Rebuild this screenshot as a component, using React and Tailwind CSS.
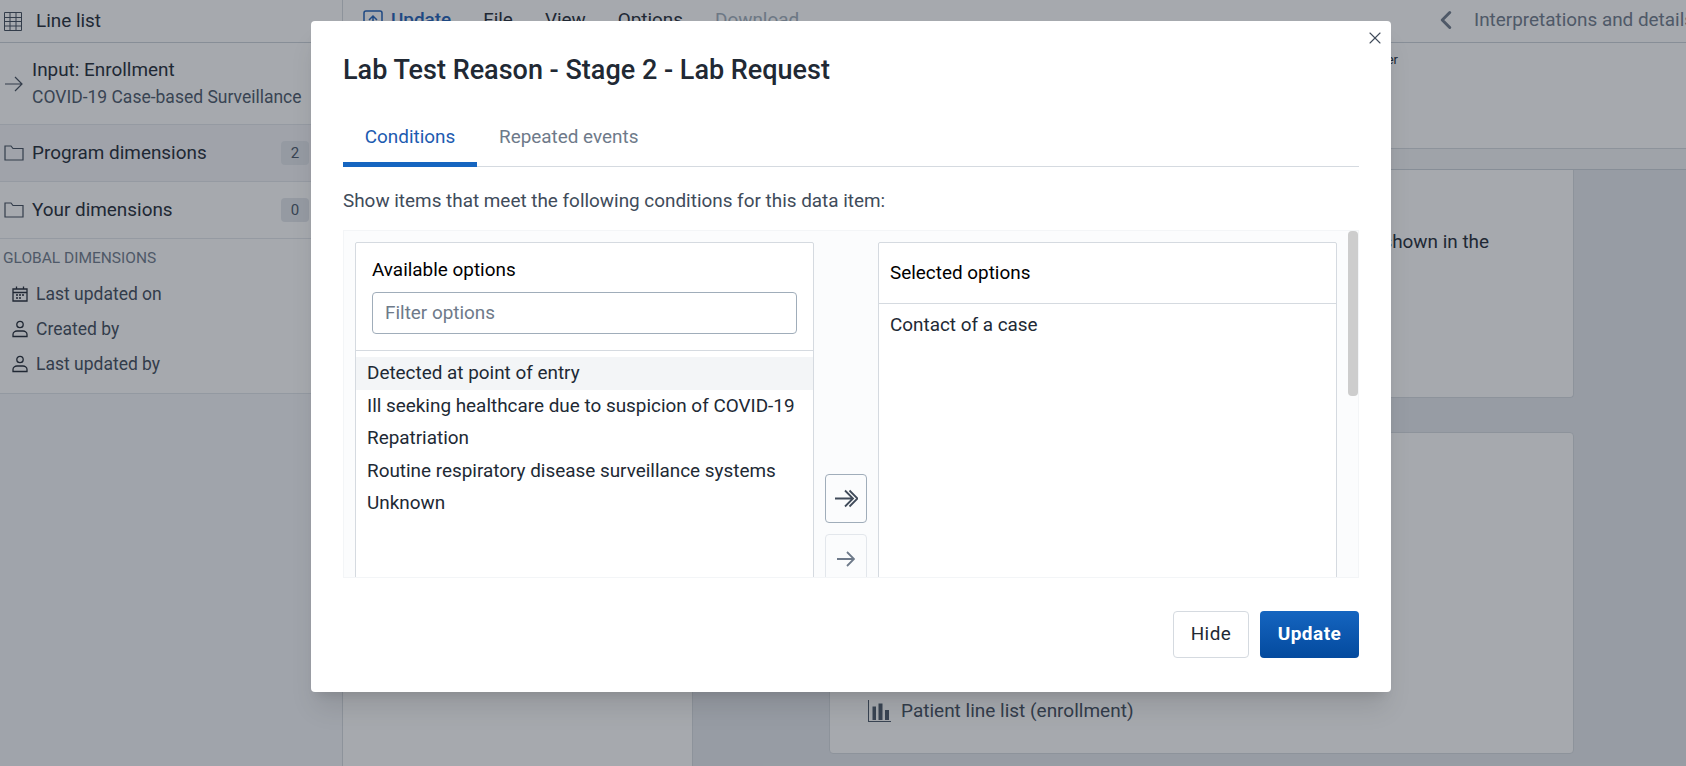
import React from 'react'
import { X, ChevronLeft } from 'lucide-react'

// small outline icons drawn to match the app's own set
const TableIcon = () => (
  <svg width="18" height="19" viewBox="0 0 18 19" fill="none" stroke="#404b5a" strokeWidth="1">
    <path d="M0.5 0.5h17v18h-17zM0.5 5.500h17M0.5 9.500h17M0.500 14h17M6 0.500v18M12 0.500v18" />
  </svg>
)

const FolderIcon = () => (
  <svg width="20" height="16" viewBox="0 0 20 16" fill="none" stroke="#404b5a" strokeWidth="1.2">
    <path d="M1 15V1h6l2 2.500h10V15H1z" />
  </svg>
)

const CalendarIcon = () => (
  <svg width="16" height="16" viewBox="0 0 16 16" fill="none" stroke="#212934" strokeWidth="1.3">
    <path d="M1 3h14v12H1zM1 6.500h14M4.500 0.500V3M11.500 0.500V3" />
    <path d="M4 9h2M7 9h2M10 9h2M4 12h2M7 12h2" />
  </svg>
)

const UserIcon = () => (
  <svg width="16" height="18" viewBox="0 0 16 18" fill="none" stroke="#212934" strokeWidth="1.300">
    <circle cx="8" cy="4.500" r="3.200" />
    <path d="M1 16.500v-2c0-2 2-3.500 4-3.500h6c2 0 4 1.500 4 3.500v2z" />
  </svg>
)

const ChartIcon = () => (
  <svg width="23" height="22" viewBox="0 0 23 22" fill="#4a5768">
    <path d="M0 0h1v21h22v1H0z" />
    <path d="M4.500 6.500h3.500V20H4.500zM10.500 3.500h4V20h-4zM17 10h4v10h-4z" />
  </svg>
)

const UploadIcon = () => (
  <svg width="20" height="20" viewBox="0 0 20 20" fill="none" stroke="#1d5fb8" strokeWidth="1.5">
    <path d="M1 18V3a2 2 0 0 1 2-2h14a2 2 0 0 1 2 2v15M10 18V7M6 10l4-4 4 4" />
  </svg>
)

const ThinArrow = ({ className, strokeWidth = 1.2 }) => (
  <svg width="18" height="16" viewBox="0 0 18 16" fill="none" stroke="currentColor" strokeWidth={strokeWidth} className={className}>
    <path d="M0 8h17M10 1l7 7-7 7" />
  </svg>
)

const DoubleArrow = () => (
  <svg width="23" height="19" viewBox="0 0 23 19" fill="none" stroke="currentColor" strokeWidth="1.800">
    <path d="M0 9.500h18M10 1.500l8 8-8 8M14.500 1.500l8 8-8 8" />
  </svg>
)

const SideRow = ({ label, count, active }) => (
  <div className={`h-[57px] flex items-center pl-1 pr-[33px] border-b border-[#e3e7ec] ${active ? 'bg-[#f5f6f9]' : ''}`}>
    <FolderIcon />
    <span className="ml-2 flex-1 text-[18.9px] text-[#212934]">{label}</span>
    <span className="w-7 h-6 rounded bg-[#e3e7ec] text-[#4a5768] text-[15px] flex items-center justify-center">{count}</span>
  </div>
)

const Background = () => (
  <div className="w-full h-full flex bg-[#e6eaef] text-[#212934]">
    <div className="w-[343px] shrink-0 bg-[#f6f7fb] border-r border-[#d5dae0]">
      <div className="bg-white">
        <div className="h-[43px] flex items-center pl-1 gap-[14px] border-b border-[#ccd2d9]">
          <TableIcon />
          <span className="text-[18.9px] pt-[1px]">Line list</span>
        </div>
        <div className="h-[82px] flex items-center pl-[5px] border-b border-[#e3e7ec]">
          <ThinArrow className="text-[#404b5a]" />
          <div className="ml-[9px]">
            <div className="text-[18.9px] leading-[27px]">Input: Enrollment</div>
            <div className="text-[17.5px] leading-[29px] text-[#4a5768]">COVID-19 Case-based Surveillance</div>
          </div>
        </div>
        <SideRow label="Program dimensions" count="2" active />
        <SideRow label="Your dimensions" count="0" />
        <div className="h-[155px] pt-[8px] border-b border-[#dfe4ea]">
          <div className="pl-[3px] text-[15.5px] text-[#6e7a8a]">GLOBAL DIMENSIONS</div>
          <div className="mt-[12px] pl-3 flex flex-col gap-[11px] text-[17.5px] text-[#404b5a]">
            <div className="h-6 flex items-center gap-2"><CalendarIcon />Last updated on</div>
            <div className="h-6 flex items-center gap-2"><UserIcon />Created by</div>
            <div className="h-6 flex items-center gap-2"><UserIcon />Last updated by</div>
          </div>
        </div>
      </div>
    </div>

    <div className="flex-1 flex flex-col min-w-0">
      <div className="h-[43px] bg-white border-b border-[#ccd2d9] flex items-center pl-5 pb-[2px] text-[18.9px]">
        <UploadIcon />
        <span className="ml-2 text-[#1d5fb8] font-medium">Update</span>
        <span className="ml-8">File</span>
        <span className="ml-8">View</span>
        <span className="ml-8">Options</span>
        <span className="ml-8 text-[#a0adba]">Download</span>
        <div className="ml-auto flex items-center whitespace-nowrap overflow-hidden w-[255px] text-[#6e7a8a] shrink-0">
          <ChevronLeft size={30} strokeWidth={2.4} className="shrink-0" />
          <span className="ml-[13px]">Interpretations and details</span>
        </div>
      </div>
      <div className="h-[106px] bg-white border-b border-[#d5dae0] flex justify-end pr-[288px] pt-[7px] text-[13px]">
        <span>er</span>
      </div>
      <div className="h-[21px] bg-[#f3f5f7] border-b border-[#ccd2d9]"></div>
      <div className="flex-1 flex min-h-0">
        <div className="w-[350px] shrink-0 bg-white border-r border-[#d5dae0]"></div>
        <div className="flex-1 pl-[136px] pr-[112px] flex flex-col gap-[34px]">
          <div className="h-[228px] bg-white rounded-b border border-t-0 border-[#d5dae0] flex justify-end pt-[58px] pr-[84px] text-[18.9px]">
            shown in the
          </div>
          <div className="h-[322px] bg-white rounded border border-[#d5dae0] flex items-end pb-[28px] pl-[38px] text-[19px] text-[#404b5a]">
            <div className="flex items-center gap-[10px]">
              <ChartIcon />
              Patient line list (enrollment)
            </div>
          </div>
        </div>
      </div>
    </div>
  </div>
)

const OPTIONS = [
  'Detected at point of entry',
  'Ill seeking healthcare due to suspicion of COVID-19',
  'Repatriation',
  'Routine respiratory disease surveillance systems',
  'Unknown',
]

const Transfer = () => (
  <div className="relative h-[348px] bg-[#fbfcfd] border border-[#f3f5f7] overflow-hidden flex pl-[11px] pt-[11px]">
    <div className="w-[459px] h-[500px] shrink-0 bg-white border border-[#d5dae0] rounded-t-[2px]">
      <div className="h-[108px] px-4 pt-[15px] border-b border-[#d5dae0]">
        <div className="text-[18.9px] text-[#000] leading-[24px]">Available options</div>
        <input
          placeholder="Filter options"
          className="mt-[10px] w-[425px] h-[42px] px-3 pb-[2px] text-[18.9px] bg-white border border-[#a0adba] rounded placeholder:text-[#6e7a8a] outline-none"
        />
      </div>
      <div className="pt-[6px] text-[18.9px] text-[#212934]">
        {OPTIONS.map((o, i) => (
          <div key={o} className={`h-[32.5px] pl-[11px] flex items-center whitespace-nowrap ${i === 0 ? 'bg-[#f3f5f7]' : ''}`}>
            {o}
          </div>
        ))}
      </div>
    </div>
    <div className="w-[64px] shrink-0 flex flex-col items-center pt-[232px] gap-[11px]">
      <button className="w-[42px] h-[49px] shrink-0 rounded border border-[#a0adba] bg-[#fbfcfd] flex items-center justify-center text-[#404b5a]">
        <DoubleArrow />
      </button>
      <button className="w-[42px] h-[49px] shrink-0 rounded border border-[#e3e7ec] bg-[#fbfcfd] flex items-center justify-center text-[#6e7a8a]">
        <ThinArrow strokeWidth={1.8} />
      </button>
    </div>
    <div className="w-[459px] h-[500px] shrink-0 bg-white border border-[#d5dae0] rounded-t-[2px]">
      <div className="h-[61px] px-[11px] flex items-center border-b border-[#d5dae0] text-[18.9px] text-[#000]">Selected options</div>
      <div className="px-[11px] pt-[7px] text-[18.9px] text-[#212934]">Contact of a case</div>
    </div>
    <div className="absolute right-0 top-0 w-[10px] h-[165px] rounded bg-[#cdcdcd]"></div>
  </div>
)

const Modal = () => (
  <div className="relative w-[1080px] h-[671px] bg-white rounded-[4px] shadow-xl px-[32px] pt-[33px]">
    <button className="absolute top-[7px] right-[6px] text-[#404b5a]">
      <X size={20} strokeWidth={1.3} />
    </button>
    <h2 className="text-[27px] font-medium leading-[32px] text-[#212934]">Lab Test Reason - Stage 2 - Lab Request</h2>
    <div className="mt-[24px] flex border-b border-[#d5dae0] text-[18.9px] h-[57px]">
      <div className="w-[134px] h-[57px] pt-[2px] flex items-center justify-center text-[#1d5bb0] border-b-[5px] border-[#1565c0]">Conditions</div>
      <div className="h-[57px] pt-[2px] pl-[22px] border-b-[5px] border-transparent flex items-center text-[#6e7a8a]">Repeated events</div>
    </div>
    <p className="mt-[22px] text-[18.9px] leading-[24px] text-[#404b5a]">Show items that meet the following conditions for this data item:</p>
    <div className="mt-[17px]"><Transfer /></div>
    <div className="mt-[33px] flex justify-end gap-[11px]">
      <button className="w-[76px] h-[47px] rounded border border-[#d5dae0] bg-white text-[18.9px] tracking-wide text-[#212934]">Hide</button>
      <button className="w-[99px] h-[47px] rounded bg-gradient-to-b from-[#1565c0] to-[#044a9e] text-[19px] tracking-wide font-bold text-white">Update</button>
    </div>
  </div>
)

const App = () => (
  <div className="relative w-[1686px] h-[766px] overflow-hidden font-['Roboto',sans-serif]">
    <Background />
    <div className="absolute inset-0 bg-[rgba(33,41,52,0.4)]"></div>
    <div className="absolute inset-0 pl-[311px] pt-[21px]">
      <Modal />
    </div>
  </div>
)

export default App
